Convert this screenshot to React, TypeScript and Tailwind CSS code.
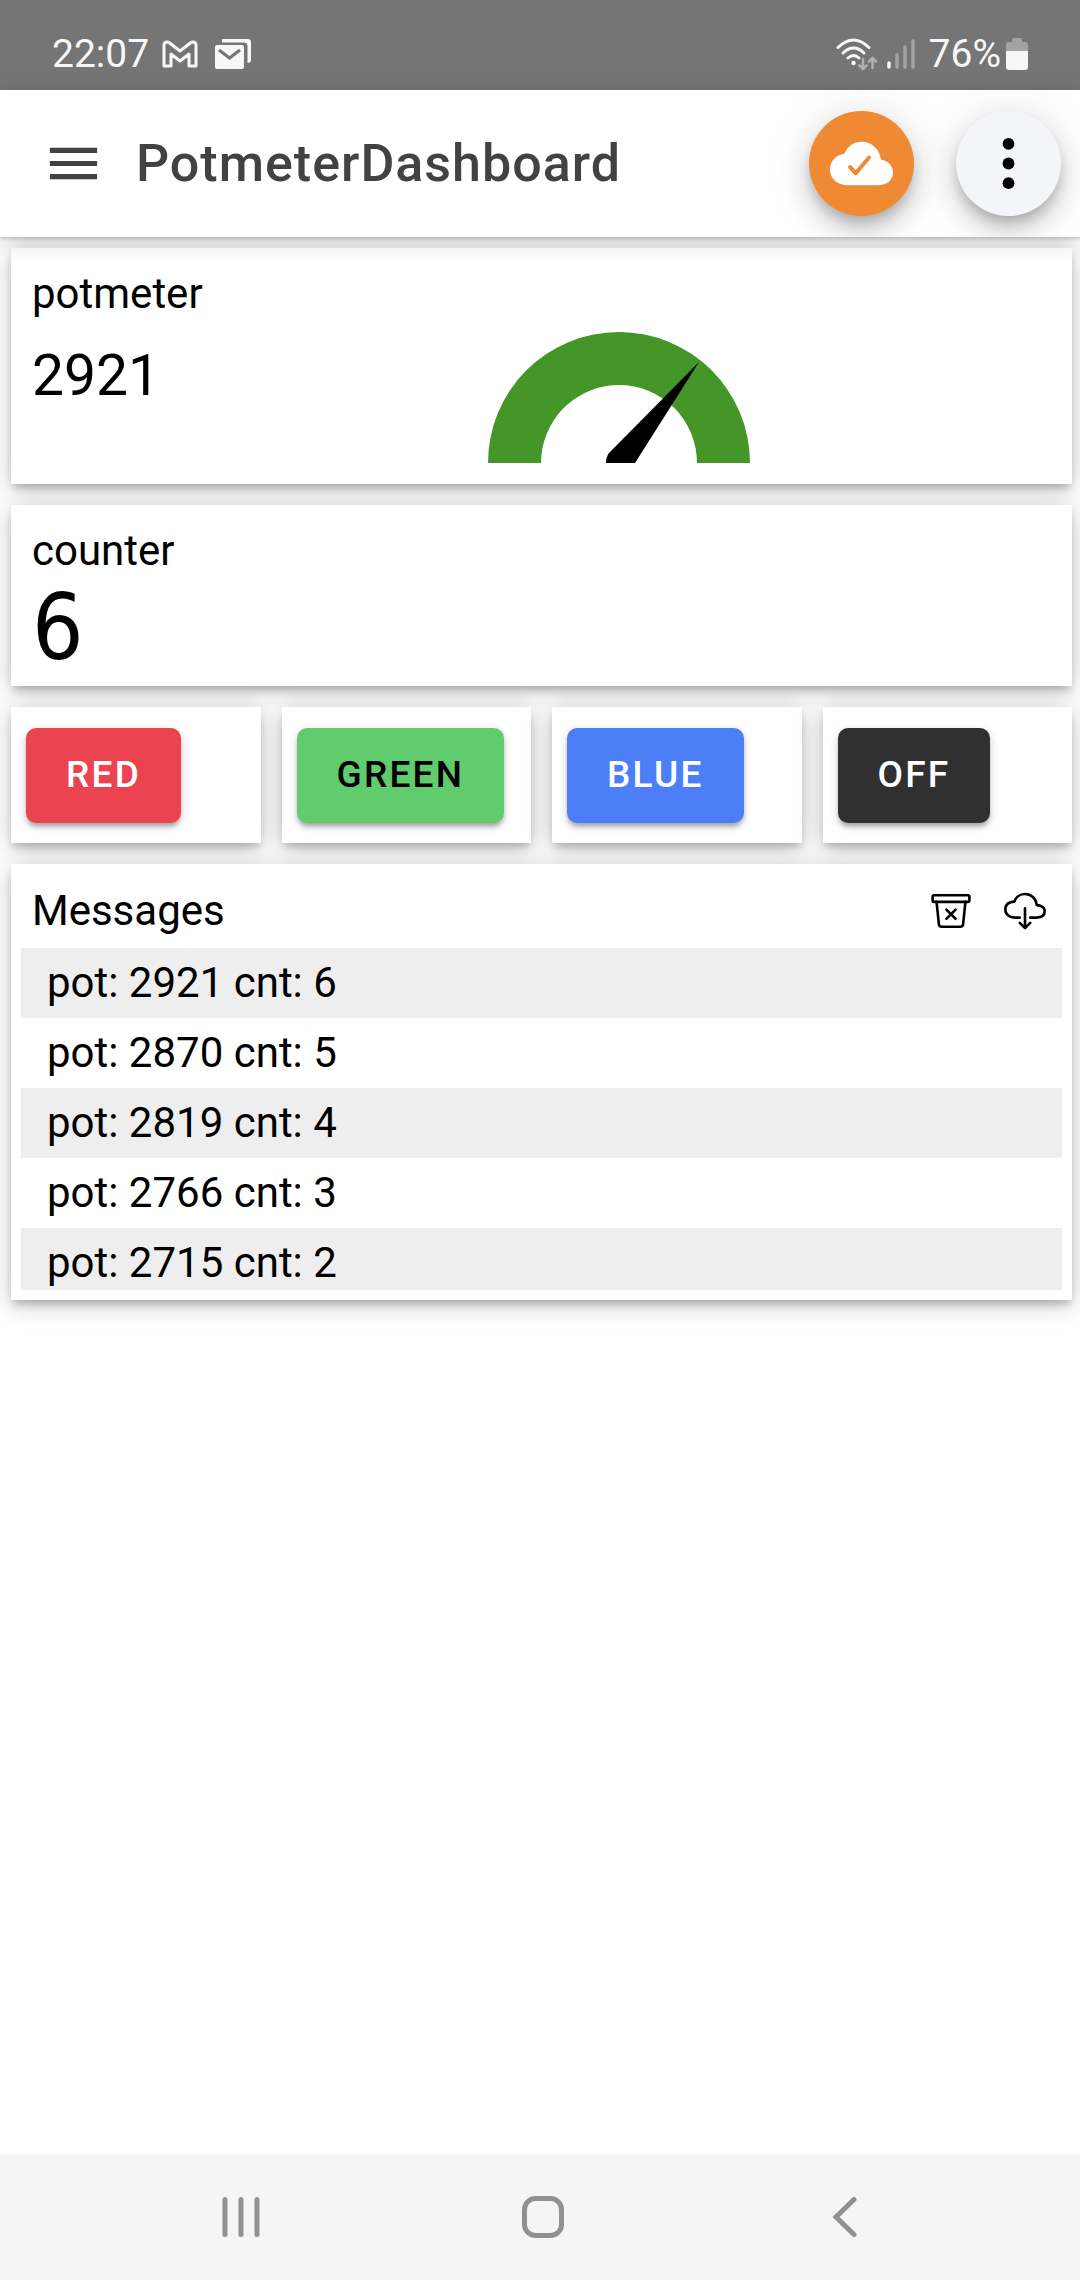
import type { ReactNode } from "react";
import {
  IoCloudDone,
  IoCloudDownloadOutline,
  IoEllipsisVertical,
  IoMenuSharp,
  IoTrashBinOutline,
} from "react-icons/io5";

const messages = [
  "pot: 2921 cnt: 6",
  "pot: 2870 cnt: 5",
  "pot: 2819 cnt: 4",
  "pot: 2766 cnt: 3",
  "pot: 2715 cnt: 2",
];

const actions = [
  { label: "RED", style: "bg-[#eb4450] text-white" },
  { label: "GREEN", style: "bg-[#61cc6e] text-black" },
  { label: "BLUE", style: "bg-[#4c7ef7] text-white" },
  { label: "OFF", style: "bg-[#303030] text-white" },
];

function Card({ children, className = "" }: { children: ReactNode; className?: string }) {
  return (
    <section
      className={`bg-white shadow-[0_6px_8px_-2px_rgba(0,0,0,0.22),0_4px_24px_0_rgba(0,0,0,0.22)] ${className}`}
    >
      {children}
    </section>
  );
}

function StatusBar() {
  return (
    <div className="flex h-[90px] items-center justify-between bg-[#757575] pt-[18px] pr-[52px] pl-[52px] text-[39px] leading-[46px] text-[#f7f7f7]">
      <div className="flex items-center">
        <span>22:07</span>
        <svg className="ml-[13px] h-[28px] w-[36px]" viewBox="0 0 36 28" fill="none" stroke="currentColor" strokeWidth="3" strokeLinejoin="round" aria-hidden="true">
          <path d="M2 26V5q0-3 3-3l2 .5L18 11 29 2.500l2-.5q3 0 3 3v21h-7V14l-9 7-9-7v12z" />
        </svg>
        <svg className="ml-[17px] h-[30px] w-[36px]" viewBox="0 0 36 30" aria-hidden="true">
          <path d="M7 0h26q3 0 3 3v18q0 3-3.500 3V7q0-3.500-3.500-3.500H7z" fill="currentColor" />
          <rect y="6" width="29" height="24" rx="2" fill="currentColor" />
          <path d="M4 11l10.500 8L25 11" fill="none" stroke="#757575" strokeWidth="3" />
        </svg>
      </div>
      <div className="flex items-center">
        <svg className="h-[32px] w-[42px]" viewBox="0 0 42 32" fill="none" strokeLinecap="round" aria-hidden="true">
          <g stroke="currentColor" strokeWidth="3">
            <path d="M2 9.500q15.500-15 31 0" />
            <path d="M7 15q10.500-10 21 0" />
            <path d="M12 20q5.500-5 11 0" />
          </g>
          <circle cx="17.500" cy="25" r="2.200" fill="currentColor" />
          <path d="M27 21v10M23.500 27.500L27 31l3.500-3.500M36.500 30V20M33 23.500l3.500-3.500 3.500 3.500" stroke="#b0b0b0" strokeWidth="2.500" />
        </svg>
        <svg className="ml-[9px] h-[30px] w-[28px]" viewBox="0 0 28 30" strokeWidth="3.500" strokeLinecap="round" aria-hidden="true">
          <path d="M2 24v4" stroke="currentColor" />
          <path d="M10 16v12M18 8v20M26 2v26" stroke="#a3a3a3" />
        </svg>
        <span className="ml-[14px]">76%</span>
        <svg className="ml-[5px] h-[32px] w-[22px]" viewBox="0 0 22 32" aria-hidden="true">
          <path d="M0 13V7q0-3 3-3h3V2q0-2 2-2h6q2 0 2 2v2h3q3 0 3 3v6z" fill="#a3a3a3" />
          <path d="M0 13h22v16q0 3-3 3H3q-3 0-3-3z" fill="currentColor" />
        </svg>
      </div>
    </div>
  );
}

function Header() {
  return (
    <header className="relative h-[147px] bg-white shadow-[0_2px_3px_0_rgba(0,0,0,0.15),0_4px_20px_0_rgba(0,0,0,0.18)]">
      <div className="flex h-full items-center overflow-hidden pr-[19px] pl-[42px] text-[#424242]">
        <button type="button" aria-label="Menu">
          <IoMenuSharp className="size-[63px]" />
        </button>
        <h1 className="ml-[31px] flex-1 text-[52px] leading-[60px] font-medium tracking-[1px]">PotmeterDashboard</h1>
        <div className="flex gap-[42px]">
          <button
            type="button"
            aria-label="Connected"
            className="flex size-[105px] items-center justify-center rounded-full bg-[#ef8933] text-white shadow-[0_8px_13px_-3px_rgba(0,0,0,0.2),0_16px_26px_0_rgba(0,0,0,0.14),0_3px_47px_0_rgba(0,0,0,0.12)]"
          >
            <IoCloudDone className="size-[63px]" />
          </button>
          <button
            type="button"
            aria-label="More options"
            className="flex size-[105px] items-center justify-center rounded-full bg-[#f4f5f8] text-black shadow-[0_8px_13px_-3px_rgba(0,0,0,0.2),0_16px_26px_0_rgba(0,0,0,0.14),0_3px_47px_0_rgba(0,0,0,0.12)]"
          >
            <IoEllipsisVertical className="size-[63px]" />
          </button>
        </div>
      </div>
    </header>
  );
}

function Gauge() {
  return (
    <svg className="h-[131px] w-[262px]" viewBox="0 0 262 131" role="img" aria-label="Gauge">
      <path d="M0 131a131 131 0 0 1 262 0h-53a78 78 0 0 0-156 0z" fill="#449628" />
      <path d="M118 131q0-6 3-10L211 30 147 131z" fill="#000" />
    </svg>
  );
}

function NavBar() {
  return (
    <nav className="mt-auto grid h-[126px] grid-cols-3 bg-[#f5f5f5] pr-[84px] pl-[90px] text-[#919191]">
      <button type="button" aria-label="Recent apps" className="flex items-center justify-center">
        <svg className="size-[42px]" viewBox="0 0 42 42" stroke="currentColor" strokeWidth="5" strokeLinecap="round">
          <path d="M5 3.500v35M21 3.500v35M37 3.500v35" />
        </svg>
      </button>
      <button type="button" aria-label="Home" className="flex items-center justify-center">
        <svg className="size-[42px]" viewBox="0 0 42 42" fill="none" stroke="currentColor" strokeWidth="5">
          <rect x="2.500" y="2.500" width="37" height="37" rx="11" />
        </svg>
      </button>
      <button type="button" aria-label="Back" className="flex items-center justify-center">
        <svg className="size-[42px]" viewBox="0 0 42 42" fill="none" stroke="currentColor" strokeWidth="5" strokeLinecap="round">
          <path d="M30 3.500L12 21l18 17.500" />
        </svg>
      </button>
    </nav>
  );
}

export default function App() {
  return (
    <div className="flex min-h-screen flex-col bg-white font-['Roboto',sans-serif] text-black">
      <StatusBar />
      <Header />

      <main className="flex flex-col gap-[21px] pt-[11px] pr-[8px] pb-[21px] pl-[11px]">
        <Card className="pt-[21px] pb-[21px]">
          <h2 className="pl-[21px] text-[42px] leading-[49px]">potmeter</h2>
          <div className="mt-[14px] flex">
            <p className="w-[45%] pt-[11px] pl-[21px] text-[57px] leading-[66px]">2921</p>
            <Gauge />
          </div>
        </Card>

        <Card className="px-[21px] pt-[21px] pb-[10px]">
          <h2 className="text-[42px] leading-[49px]">counter</h2>
          <p className="pt-[5px] font-['DejaVu_Sans_Condensed','DejaVu_Sans',sans-serif] text-[90px] leading-[96px]">6</p>
        </Card>

        <div className="grid grid-cols-4 gap-[21px]">
          {actions.map((action) => (
            <Card key={action.label} className="px-[15px] pt-[21px] pb-[20px]">
              <button
                type="button"
                className={`h-[95px] rounded-[10px] px-[40px] pb-[2px] text-[37px] font-medium tracking-[0.06em] shadow-[0_5px_5px_-2px_rgba(0,0,0,0.25),0_3px_8px_0_rgba(0,0,0,0.2)] ${action.style}`}
              >
                {action.label}
              </button>
            </Card>
          ))}
        </div>

        <Card className="px-[10px] pt-[22px] pb-[10px]">
          <div className="flex items-center justify-between pr-[16px] pl-[11px]">
            <h2 className="text-[42px] leading-[49px]">Messages</h2>
            <div className="flex gap-8">
              <button type="button" aria-label="Clear messages">
                <IoTrashBinOutline className="size-[42px]" />
              </button>
              <button type="button" aria-label="Download messages">
                <IoCloudDownloadOutline className="size-[42px]" />
              </button>
            </div>
          </div>
          <ul className="mt-[13px] h-[342px] overflow-hidden">
            {messages.map((message) => (
              <li key={message} className="px-[26px] text-[42px] leading-[70px] odd:bg-[#eeeeee]">
                {message}
              </li>
            ))}
          </ul>
        </Card>
      </main>

      <NavBar />
    </div>
  );
}
